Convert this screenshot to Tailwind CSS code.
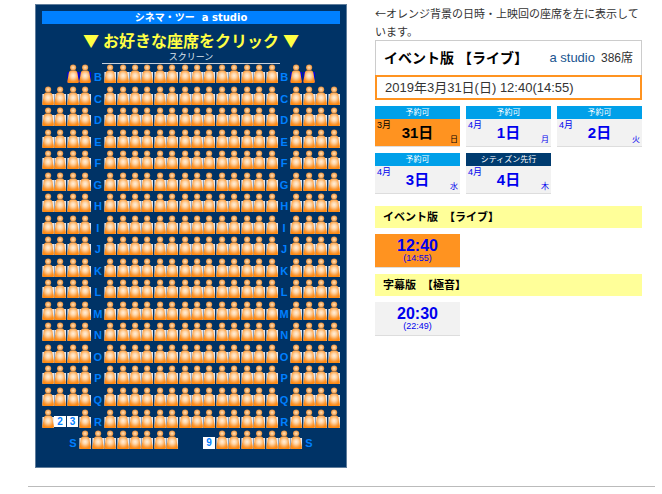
<!DOCTYPE html>
<html lang="ja">
<head>
  <meta charset="UTF-8" />
  <meta name="viewport" content="width=device-width, initial-scale=1.0"/>
  <title>シネマ・ツー a studio 座席予約</title>
  <script src="https://cdn.jsdelivr.net/npm/@tailwindcss/browser@4"></script>
</head>
<body class="bg-white font-['Liberation_Sans','Noto_Sans_CJK_JP',sans-serif] text-[#333]">

  <!-- Seat shapes -->
  <svg class="absolute size-0" aria-hidden="true">
    <defs>
      <radialGradient id="body-fill" cx="50%" cy="42%" r="56%">
        <stop offset="0" stop-color="#fff0dc"/>
        <stop offset="0.35" stop-color="#ffd6a8"/>
        <stop offset="0.8" stop-color="#fb9a38"/>
        <stop offset="1" stop-color="#ff8a12"/>
      </radialGradient>
      <radialGradient id="head-fill" cx="50%" cy="50%" r="55%">
        <stop offset="0" stop-color="#ffe2ba"/>
        <stop offset="0.5" stop-color="#f8b876"/>
        <stop offset="1" stop-color="#d87c26"/>
      </radialGradient>
      <symbol id="person" viewBox="0 0 124 215">
        <path d="M38 64 C24 68 17 80 15 104 C12 132 5 156 3 176 Q2 190 16 190 H106 Q120 190 119 176 C117 156 110 132 107 104 C105 80 98 68 84 64 Z" fill="url(#body-fill)"/>
        <circle cx="61" cy="35" r="31" fill="url(#head-fill)"/>
      </symbol>
    </defs>
  </svg>

  <main class="flex items-start gap-7 pt-1 pl-[35px] pr-5">

    <!-- Seat map -->
    <section class="w-[312px] shrink-0 border border-[#5f7d9c] bg-[#003366] px-1.5 pt-1.5 pb-[15px]">
      <h1 class="bg-[#0080ff] text-center font-['DejaVu_Sans','Noto_Sans_CJK_JP',sans-serif] text-[10px] leading-[13px] font-bold text-white">シネマ・ツー&nbsp; a studio</h1>
      <h2 class="mt-1 flex justify-center gap-1 font-['Noto_Sans_CJK_JP',sans-serif] text-base leading-6 font-bold text-[#ffff44]"><span>▼</span><span>お好きな座席をクリック</span><span>▼</span></h2>
      <div class="mx-auto w-3/5 border-b border-[#c5d0dc] text-center text-[9px] leading-[11px] text-[#dde5ee]">スクリーン</div>
      <div id="seats" class="grid grid-cols-[repeat(24,minmax(0,1fr))]"></div>
    </section>

    <!-- Schedule -->
    <section class="min-w-0 flex-1">
      <p class="font-['Noto_Sans_CJK_JP',sans-serif] text-[11px] leading-[18px]">←オレンジ背景の日時・上映回の座席を左に表示しています。</p>

      <div class="flex h-[35px] items-center justify-between border border-b-0 border-[#ccc] px-2">
        <h2 class="text-sm font-bold text-black">イベント版 【ライブ】</h2>
        <p class="text-xs"><a href="#" class="mr-1.5 text-[13px] text-[#20558f]">a studio</a><span>386席</span></p>
      </div>
      <p class="border-2 border-[#ff9320] px-2 text-[13px] leading-[21px]">2019年3月31日(日) 12:40(14:55)</p>

      <div id="days" class="mt-1.5 grid grid-cols-3 gap-1.5"></div>

      <h3 class="mt-3 bg-[#ffff99] px-2 text-[11px] leading-[22px] font-bold text-black">イベント版&nbsp; 【ライブ】</h3>
      <div class="my-1.5 grid grid-cols-3 gap-1.5">
        <a href="#" class="border-b border-[#ddd] bg-[#ff9320] pt-1 pb-1 text-center text-[#0000ee]">
          <span class="block text-base leading-4 font-bold">12:40</span>
          <span class="block text-[9px] leading-[9px]">(14:55)</span>
        </a>
      </div>

      <h3 class="bg-[#ffff99] px-2 text-[11px] leading-[22px] font-bold text-black">字幕版&nbsp; 【極音】</h3>
      <div class="my-1.5 grid grid-cols-3 gap-1.5">
        <a href="#" class="border-b border-[#ddd] bg-[#f2f2f2] pt-1 pb-1 text-center text-[#0000ee]">
          <span class="block text-base leading-4 font-bold">20:30</span>
          <span class="block text-[9px] leading-[9px]">(22:49)</span>
        </a>
      </div>
    </section>
  </main>

  <hr class="mt-[18px] mr-[7px] ml-7 border-[#bbb]"/>

  <script>
    // x = sold, w = sold wheelchair space, . = aisle, digit = free seat, letter = row name
    const rows = ["..wwBxxxxxxxxxxxxxxBww.."];
    for (const name of "CDEFGHIJKLMNOPQ") {
      rows.push("xxxx" + name + "xxxxxxxxxxxxxx" + name + "xxxx");
    }
    rows.push("x23xRxxxxxxxxxxxxxxRxxxx");
    rows.push("..Sxxxxxxxx..9xxxxxxxS..");

    function seatHtml(c) {
      if (c === "x" || c === "w") {
        return `
          <svg viewBox="0 0 124 215" class="block w-full">
            <rect x="4" y="80" width="116" height="108" fill="${c === "w" ? "#0000e6" : "#e6e9f0"}"/>
            <use href="#person" width="124" height="215"/>
          </svg>`;
      }
      if (c === ".") return `<span></span>`;
      if (/\d/.test(c)) {
        return `<button type="button" class="mt-[7px] mr-px mb-[3px] cursor-pointer bg-white text-[10px] leading-[11px] font-bold text-[#0080ff]">${c}</button>`;
      }
      return `<span class="pt-[7px] text-center text-[11px] leading-3 font-bold text-[#0080ff]">${c}</span>`;
    }

    document.getElementById("seats").innerHTML = rows.map(r => [...r].map(seatHtml).join("")).join("");

    // Selectable days
    const days = [
      { month: 3, day: 31, week: "日", label: "予約可", selected: true },
      { month: 4, day: 1, week: "月", label: "予約可" },
      { month: 4, day: 2, week: "火", label: "予約可" },
      { month: 4, day: 3, week: "水", label: "予約可" },
      { month: 4, day: 4, week: "木", label: "シティズン先行", citizen: true }
    ];

    document.getElementById("days").innerHTML = days.map(d => `
      <a href="#" class="block border-b border-[#ddd] ${d.selected ? "bg-[#ff9320] text-black" : "bg-[#f2f2f2] text-[#0000ee]"}">
        <span class="block text-center text-[8px] leading-[13px] text-white ${d.citizen ? "bg-[#003b6f]" : "bg-[#00a0e9]"}">${d.label}</span>
        <span class="grid h-[27px] grid-cols-[1fr_auto_1fr] px-0.5">
          <span class="text-[9px] leading-[13px]">${d.month}月</span>
          <span class="text-[15px] leading-[27px] font-bold">${d.day}日</span>
          <span class="self-end text-right text-[8px] leading-[13px]">${d.week}</span>
        </span>
      </a>
    `).join("");
  </script>
</body>
</html>
